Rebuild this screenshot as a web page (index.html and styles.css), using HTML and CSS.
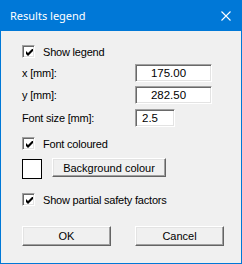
FILE: index.html
```html
<!DOCTYPE html>
<html lang="en">
<head>
    <meta charset="UTF-8">
    <title>Results legend</title>
    <link rel="stylesheet" href="styles.css">
</head>
<body>

    <div class="window">
        <div class="titlebar">
            <span class="title">Results legend</span>
            <svg class="close" width="10" height="10" viewBox="0 0 10 10">
                <path d="M0.5 0.5 L9.5 9.5 M9.5 0.5 L0.5 9.5" stroke="#fff" stroke-width="1.1" fill="none"/>
            </svg>
        </div>

        <div class="content">
            <label class="check-row first">
                <span class="checkbox">
                    <svg width="7" height="7" viewBox="0 0 7 7"><polygon points="0,2 2,4 7,-1 7,2 2,7 0,5" fill="#000"/></svg>
                </span>
                <span>Show legend</span>
            </label>

            <div class="field-row r1">
                <span class="label">x [mm]:</span>
                <span class="input wide">175.00</span>
            </div>
            <div class="field-row r2">
                <span class="label">y [mm]:</span>
                <span class="input wide">282.50</span>
            </div>
            <div class="field-row r3">
                <span class="label">Font size [mm]:</span>
                <span class="input narrow">2.5</span>
            </div>

            <label class="check-row second">
                <span class="checkbox">
                    <svg width="7" height="7" viewBox="0 0 7 7"><polygon points="0,2 2,4 7,-1 7,2 2,7 0,5" fill="#000"/></svg>
                </span>
                <span>Font coloured</span>
            </label>

            <div class="colour-row">
                <span class="swatch"></span>
                <button class="btn colour-btn" type="button">Background colour</button>
            </div>

            <label class="check-row third">
                <span class="checkbox">
                    <svg width="7" height="7" viewBox="0 0 7 7"><polygon points="0,2 2,4 7,-1 7,2 2,7 0,5" fill="#000"/></svg>
                </span>
                <span>Show partial safety factors</span>
            </label>

            <div class="button-row">
                <button class="btn action" type="button">OK</button>
                <button class="btn action" type="button">Cancel</button>
            </div>
        </div>
    </div>

</body>
</html>
```

FILE: styles.css
```css
body {
    margin: 0;
    padding: 0;
    background-color: #f0f0f0;
    font-family: "Liberation Sans", Arial, sans-serif;
    font-size: 11px;
    letter-spacing: -0.2px;
    color: #000;
}
.window {
    width: 242px;
    height: 264px;
    box-sizing: border-box;
    border: 1px solid #0078d7;
    border-top: none;
    background-color: #f0f0f0;
}
.titlebar {
    height: 31px;
    margin: 0 -1px;
    padding: 0 11px 0 10px;
    background-color: #0078d7;
    color: white;
    display: flex;
    align-items: center;
    justify-content: space-between;
}
.title {
    font-family: "Noto Sans", sans-serif;
    font-size: 11px;
    letter-spacing: 0;
}
.content {
    padding-left: 21px;
    display: flex;
    flex-direction: column;
}
.check-row {
    display: flex;
    align-items: center;
    gap: 8px;
    height: 13px;
}
.check-row.first {
    margin-top: 14px;
}
.check-row.second {
    margin-top: 10px;
}
.check-row.third {
    margin-top: 14px;
}
.checkbox {
    width: 13px;
    height: 13px;
    box-sizing: border-box;
    padding: 2px 0 0 2px;
    border-top: 1px solid #a0a0a0;
    border-left: 1px solid #a0a0a0;
    border-right: 1px solid #fff;
    border-bottom: 1px solid #fff;
    background: white;
    box-shadow: inset 1px 1px 0 #696969, inset -1px -1px 0 #e3e3e3;
    display: flex;
    align-items: flex-start;
    justify-content: flex-start;
}
.checkbox svg {
    display: block;
    margin: 1px 0 0 1px;
}
.field-row {
    display: flex;
    align-items: center;
}
.field-row.r1 {
    margin-top: 6px;
}
.field-row.r2 {
    margin-top: 4px;
}
.field-row.r3 {
    margin-top: 5px;
}
.label {
    width: 113px;
}
.input {
    height: 18px;
    box-sizing: border-box;
    padding-right: 10px;
    border-top: 1px solid #a0a0a0;
    border-left: 1px solid #a0a0a0;
    border-right: 1px solid #fff;
    border-bottom: 1px solid #fff;
    box-shadow: inset 1px 1px 0 #696969, inset -1px -1px 0 #e3e3e3;
    background: white;
    text-align: center;
    line-height: 16px;
    font-size: 11.5px;
    letter-spacing: 0;
}
.input.wide {
    width: 77px;
}
.input.narrow {
    width: 40px;
}
.colour-row {
    display: flex;
    align-items: flex-start;
    gap: 10px;
    margin-top: 8px;
}
.swatch {
    width: 20px;
    height: 20px;
    box-sizing: border-box;
    margin-top: 1px;
    border: 1px solid #000;
    background: white;
}
.btn {
    font-family: "Liberation Sans", Arial, sans-serif;
    font-size: 11px;
    color: #000;
    background-color: #f0f0f0;
    padding: 0;
    box-sizing: border-box;
    border-top: 1px solid #fff;
    border-left: 1px solid #fff;
    border-right: 1px solid #646464;
    border-bottom: 1px solid #646464;
    box-shadow: inset -1px -1px 0 #a0a0a0, inset 1px 1px 0 #e3e3e3;
}
.colour-btn {
    width: 114px;
    height: 19px;
}
.button-row {
    display: flex;
    gap: 24px;
    margin-top: 20px;
}
.action {
    width: 89px;
    height: 20px;
}
```
